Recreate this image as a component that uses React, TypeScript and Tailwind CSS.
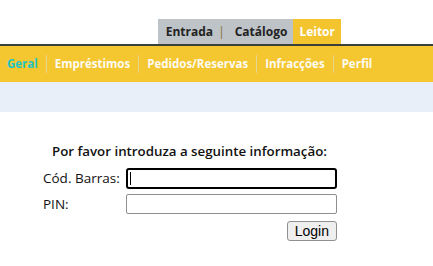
import React from 'react';

const navItems = ['Geral', 'Empréstimos', 'Pedidos/Reservas', 'Infracções', 'Perfil'];

export default function App() {
  return (
    <div className="w-[433px] h-[266px] bg-white font-['Open_Sans',sans-serif] overflow-hidden">
      {/* top tabs */}
      <div className="flex justify-end items-end h-[46px] pr-[92px] border-b-2 border-[#3a3f3a]">
        <div className="flex items-center h-[25px] bg-[#bdc3c7] pl-[8px] pr-[6px] text-[12px] font-bold text-[#222]">
          <span>Entrada</span>
          <span className="mx-[5px] font-normal text-[#8a6d3b]">|</span>
          <span className="ml-[5px]">Catálogo</span>
        </div>
        <div className="flex items-center h-[25px] bg-[#f4c42f] px-[6px] text-[12px] font-bold text-white">
          Leitor
        </div>
      </div>

      {/* yellow sub navigation */}
      <div className="flex items-center h-[36px] bg-[#f4c62f] pl-[7px] text-[11.5px] font-bold">
        {navItems.map((item, i) => (
          <div key={item} className="flex items-center">
            {i > 0 && <span className="w-px h-[18px] bg-[#e6d58f] mx-[8px]" />}
            <span className={i === 0 ? 'text-[#1fc4c4]' : 'text-[#fdfbf2]'}>{item}</span>
          </div>
        ))}
      </div>

      {/* blue strip */}
      <div className="h-[30px] bg-[#e8eff9]" />

      {/* login form */}
      <div className="pt-[29px] pl-[43px] text-[#111]">
        <p className="pl-[9px] h-[20px] leading-[20px] text-[13.3px] font-semibold">Por favor introduza a seguinte informação:</p>
        <div className="mt-[7px] flex items-center h-[21px] text-[13.5px]">
          <span className="w-[83px]">Cód. Barras:</span>
          <div className="relative">
            <input
              type="text"
              className="w-[211px] h-[21px] border-2 border-black rounded-[3px] bg-white outline-none"
            />
            <span className="absolute left-[4px] top-[4px] w-px h-[13px] bg-black" />
          </div>
        </div>
        <div className="mt-[5px] flex items-center h-[20px] text-[13.5px]">
          <span className="w-[83px]">PIN:</span>
          <input
            type="password"
            className="w-[211px] h-[20px] border border-[#8f8f8f] rounded-[2px] bg-white outline-none"
          />
        </div>
        <div className="mt-[7px] flex justify-end w-[294px]">
          <button className="h-[20px] px-[7px] border border-[#8f8f8f] rounded-[3px] bg-[#efefef] font-['Liberation_Sans',sans-serif] text-[14px] text-black leading-none">
            Login
          </button>
        </div>
      </div>
    </div>
  );
}
